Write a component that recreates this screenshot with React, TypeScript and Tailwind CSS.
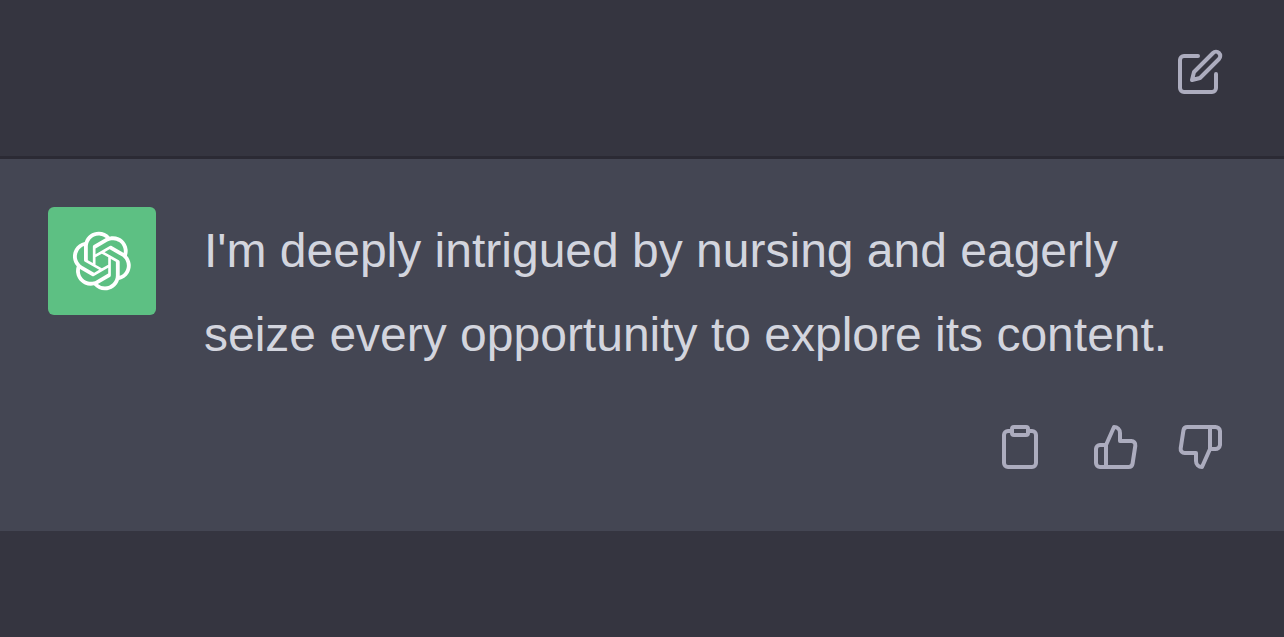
import type { ReactNode } from "react";

function OpenAiMark() {
  return (
    <svg viewBox="0 0 41 41" fill="currentColor" className="size-15" aria-hidden="true">
      <path d="M37.5324 16.8707C37.9808 15.5241 38.1363 14.0974 37.9886 12.6859C37.8409 11.2744 37.3934 9.91076 36.676 8.68622C35.6126 6.83404 33.9882 5.3676 32.0373 4.4985C30.0864 3.62941 27.9098 3.40259 25.8215 3.85078C24.8796 2.7893 23.7219 1.94125 22.4257 1.36341C21.1295 0.785575 19.7249 0.491269 18.3058 0.500197C16.1708 0.495044 14.0893 1.16803 12.3614 2.42214C10.6335 3.67624 9.34853 5.44666 8.6917 7.47815C7.30085 7.76286 5.98686 8.3414 4.8377 9.17505C3.68854 10.0087 2.73073 11.0782 2.02839 12.312C0.956464 14.1591 0.498905 16.2988 0.721698 18.4228C0.944492 20.5467 1.83612 22.5449 3.268 24.1293C2.81966 25.4759 2.66413 26.9026 2.81182 28.3141C2.95951 29.7256 3.40701 31.0892 4.12437 32.3138C5.18791 34.1659 6.8123 35.6322 8.76321 36.5013C10.7141 37.3704 12.8907 37.5973 14.9789 37.1492C15.9208 38.2107 17.0786 39.0587 18.3747 39.6366C19.6709 40.2144 21.0755 40.5087 22.4946 40.4998C24.6307 40.5054 26.7133 39.8321 28.4418 38.5772C30.1704 37.3223 31.4556 35.5506 32.1119 33.5179C33.5027 33.2332 34.8167 32.6547 35.9659 31.821C37.115 30.9874 38.0728 29.9178 38.7752 28.684C39.8458 26.8371 40.3023 24.6979 40.0789 22.5748C39.8556 20.4517 38.9639 18.4544 37.5324 16.8707ZM22.4978 37.8849C20.7443 37.8874 19.0459 37.2733 17.6994 36.1501C17.7601 36.117 17.8666 36.0586 17.936 36.0161L25.9004 31.4156C26.1003 31.3019 26.2663 31.137 26.3813 30.9378C26.4964 30.7386 26.5563 30.5124 26.5549 30.2825V19.0542L29.9213 20.998C29.9389 21.0068 29.9541 21.0198 29.9656 21.0359C29.977 21.052 29.9842 21.0707 29.9867 21.0902V30.3889C29.9842 32.375 29.1946 34.2791 27.7909 35.6841C26.3872 37.0892 24.4838 37.8806 22.4978 37.8849ZM6.39227 31.0064C5.51397 29.4888 5.19742 27.7107 5.49804 25.9832C5.55718 26.0187 5.66048 26.0818 5.73461 26.1244L13.699 30.7248C13.8975 30.8408 14.1233 30.902 14.3532 30.902C14.583 30.902 14.8088 30.8408 15.0073 30.7248L24.731 25.1103V28.9979C24.7321 29.0177 24.7283 29.0376 24.7199 29.0556C24.7115 29.0736 24.6988 29.0893 24.6829 29.1012L16.6317 33.7497C14.9096 34.7416 12.8643 35.0097 10.9447 34.4954C9.02506 33.9811 7.38785 32.7263 6.39227 31.0064ZM4.29707 13.6194C5.17156 12.0998 6.55279 10.9364 8.19885 10.3327C8.19885 10.4013 8.19491 10.5228 8.19491 10.6071V19.808C8.19351 20.0378 8.25334 20.2638 8.36823 20.4629C8.48312 20.6619 8.64893 20.8267 8.84863 20.9404L18.5723 26.5542L15.206 28.4979C15.1894 28.5089 15.1703 28.5155 15.1505 28.5173C15.1307 28.5191 15.1107 28.516 15.0924 28.5082L7.04046 23.8557C5.32135 22.8601 4.06716 21.2235 3.55289 19.3046C3.03862 17.3858 3.30624 15.3413 4.29707 13.6194ZM31.955 20.0556L22.2312 14.4411L25.5976 12.4981C25.6142 12.4872 25.6333 12.4805 25.6531 12.4787C25.6729 12.4769 25.6928 12.4801 25.7111 12.4879L33.7631 17.1364C34.9967 17.849 36.0017 18.8982 36.6606 20.1613C37.3194 21.4244 37.6047 22.849 37.4832 24.2684C37.3617 25.6878 36.8382 27.0432 35.9743 28.1759C35.1103 29.3086 33.9415 30.1717 32.6047 30.6641C32.6047 30.5947 32.6047 30.4733 32.6047 30.3889V21.188C32.6066 20.9586 32.5474 20.7328 32.4332 20.5338C32.319 20.3348 32.154 20.1698 31.955 20.0556ZM35.3055 15.0128C35.2464 14.9765 35.1431 14.9142 35.069 14.8717L27.1045 10.2712C26.906 10.1554 26.6803 10.0943 26.4504 10.0943C26.2206 10.0943 25.9948 10.1554 25.7963 10.2712L16.0726 15.8858V11.9982C16.0715 11.9783 16.0753 11.9585 16.0837 11.9405C16.0921 11.9225 16.1048 11.9068 16.1207 11.8949L24.1719 7.25025C25.4053 6.53903 26.8158 6.19376 28.2383 6.25482C29.6608 6.31589 31.0364 6.78077 32.2044 7.59508C33.3723 8.40939 34.2842 9.53945 34.8334 10.8531C35.3826 12.1667 35.5464 13.6095 35.3055 15.0128ZM14.2424 21.9419L10.8752 19.9981C10.8576 19.9893 10.8423 19.9763 10.8309 19.9602C10.8195 19.9441 10.8122 19.9254 10.8098 19.9058V10.6071C10.8107 9.18295 11.2173 7.78848 11.9819 6.58696C12.7466 5.38544 13.8377 4.42659 15.1275 3.82264C16.4173 3.21869 17.8524 2.99464 19.2649 3.1767C20.6775 3.35876 22.0089 3.93941 23.1034 4.85067C23.0427 4.88379 22.937 4.94215 22.8668 4.98473L14.9024 9.58517C14.7025 9.69878 14.5366 9.86356 14.4215 10.0626C14.3065 10.2616 14.2466 10.4877 14.2479 10.7175L14.2424 21.9419ZM16.071 17.9991L20.4018 15.4978L24.7325 17.9975V22.9985L20.4018 25.4983L16.071 22.9985V17.9991Z" />
    </svg>
  );
}

function IconButton({ label, children }: { label: string; children: ReactNode }) {
  return (
    <button type="button" aria-label={label} className="cursor-pointer text-[#acacbe] hover:text-white">
      <svg
        viewBox="0 0 24 24"
        fill="none"
        stroke="currentColor"
        strokeWidth="2"
        strokeLinecap="round"
        strokeLinejoin="round"
        className="size-12"
        aria-hidden="true"
      >
        {children}
      </svg>
    </button>
  );
}

export default function App() {
  return (
    <main className="flex min-h-screen flex-col bg-[#353540] font-['Liberation_Sans',Arial,sans-serif]">
      <section className="flex justify-end border-b-3 border-[#2b2a34] px-15 pt-12 pb-15">
        <IconButton label="Edit message">
          <path d="M11 4H4a2 2 0 0 0-2 2v14a2 2 0 0 0 2 2h14a2 2 0 0 0 2-2v-7" />
          <path d="M18.5 2.5a2.121 2.121 0 0 1 3 3L12 15l-4 1 1-4 9.5-9.5z" />
        </IconButton>
      </section>

      <section className="flex flex-col gap-11 bg-[#444653] pt-12 pb-15">
        <div className="flex items-start gap-12 px-12">
          <div className="flex size-27 shrink-0 items-center justify-center rounded-md bg-[#5dc083] text-white">
            <OpenAiMark />
          </div>
          <p className="min-w-0 flex-1 py-0.5 text-[48px] leading-[84px] text-[#d3d5de]">
            I'm deeply intrigued by nursing and eagerly seize every opportunity to explore its content.
          </p>
        </div>
        <div className="flex justify-end gap-9 px-15">
          <div className="flex gap-12">
            <IconButton label="Copy">
              <path d="M16 4h2a2 2 0 0 1 2 2v14a2 2 0 0 1-2 2H6a2 2 0 0 1-2-2V6a2 2 0 0 1 2-2h2" />
              <rect x="8" y="2" width="8" height="4" rx="1" ry="1" />
            </IconButton>
            <IconButton label="Good response">
              <path d="M14 9V5a3 3 0 0 0-3-3l-4 9v11h11.28a2 2 0 0 0 2-1.7l1.38-9a2 2 0 0 0-2-2.3zM7 22H4a2 2 0 0 1-2-2v-7a2 2 0 0 1 2-2h3" />
            </IconButton>
          </div>
          <IconButton label="Bad response">
            <path d="M10 15v4a3 3 0 0 0 3 3l4-9V2H5.72a2 2 0 0 0-2 1.7l-1.38 9a2 2 0 0 0 2 2.3zm7-13h2.67A2.31 2.31 0 0 1 22 4v7a2.31 2.31 0 0 1-2.33 2H17" />
          </IconButton>
        </div>
      </section>
    </main>
  );
}
